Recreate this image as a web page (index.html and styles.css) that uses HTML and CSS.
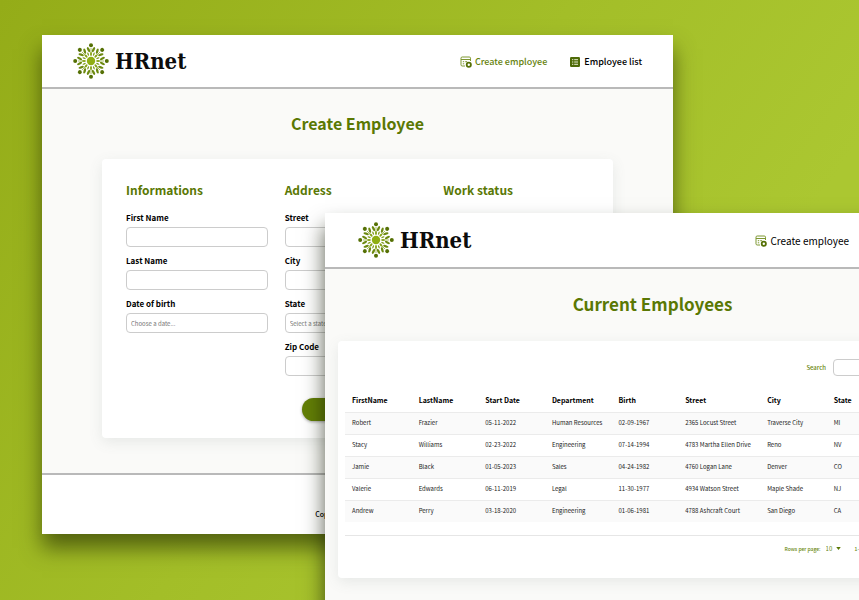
FILE: index.html
```html
<!DOCTYPE html>
<html lang="en">
<head>
<meta charset="utf-8">
<title>HRnet</title>
<link rel="stylesheet" href="styles.css">
</head>
<body>
<svg class="sprite" aria-hidden="true">
  <symbol id="logo" viewBox="0 0 36 36">
    <g id="ray">
      <circle cx="18" cy="2.200" r="2" fill="#557005"/>
      <path d="M18 5v5" stroke="#8aa32c" stroke-width=".7"/>
      <ellipse cx="18" cy="11" rx="1" ry="1.900" fill="#86a316"/>
      <ellipse cx="15.500" cy="6.600" rx="1.200" ry="2.800" transform="rotate(-28 15.500 6.600)" fill="#6d8a10"/>
      <ellipse cx="20.500" cy="6.600" rx="1.200" ry="2.800" transform="rotate(28 20.500 6.600)" fill="#6d8a10"/>
      <ellipse cx="18" cy="10.600" rx=".7" ry="1.700" transform="rotate(22.500 18 18)" fill="#7f9b1c"/>
    </g>
    <use href="#ray" transform="rotate(45 18 18)"/>
    <use href="#ray" transform="rotate(90 18 18)"/>
    <use href="#ray" transform="rotate(135 18 18)"/>
    <use href="#ray" transform="rotate(180 18 18)"/>
    <use href="#ray" transform="rotate(225 18 18)"/>
    <use href="#ray" transform="rotate(270 18 18)"/>
    <use href="#ray" transform="rotate(315 18 18)"/>
    <circle cx="18" cy="18" r="4.200" fill="#8fae12"/>
  </symbol>
  <symbol id="icon-create" viewBox="0 0 12 12">
    <path d="M5 10H2.200Q1 10 1 8.800V2.200Q1 1 2.200 1h7.100q1.200 0 1.200 1.200V5M1 3.500h9.500M2.800 5.700h1.400M5.200 5.700h2M2.800 7.800h1.400" fill="none" stroke="#7d9730" stroke-width="1"/>
    <circle cx="8.800" cy="8.800" r="2.100" fill="#fff" stroke="#557005" stroke-width="1.800"/>
  </symbol>
  <symbol id="icon-list" viewBox="0 0 12 12">
    <rect x="1" y="1" width="10" height="10" rx="1.200" fill="#4f6b08"/>
    <path d="M3 3.700h1.300M5.200 3.700H9M3 6h1.300M5.200 6H9M3 8.300h1.300M5.200 8.300H9" stroke="#e9efd6" stroke-width="1"/>
  </symbol>
</svg>

<div class="stage">
  <section class="window window-create">
    <header class="topbar">
      <a class="brand" href="#"><svg class="logo"><use href="#logo"/></svg>HRnet</a>
      <nav class="nav">
        <a class="nav-link active" href="#"><svg class="icon"><use href="#icon-create"/></svg>Create employee</a>
        <a class="nav-link" href="#"><svg class="icon"><use href="#icon-list"/></svg>Employee list</a>
      </nav>
    </header>
    <main class="content">
      <h1>Create Employee</h1>
      <form class="card form-card">
        <div class="columns">
          <div class="column">
            <h2>Informations</h2>
            <label for="first">First Name</label><input id="first" type="text">
            <label for="last">Last Name</label><input id="last" type="text">
            <label for="dob">Date of birth</label><input id="dob" type="text" placeholder="Choose a date...">
          </div>
          <div class="column">
            <h2>Address</h2>
            <label for="street">Street</label><input id="street" type="text">
            <label for="city">City</label><input id="city" type="text">
            <label for="state">State</label><select id="state"><option>Select a state...</option></select>
            <label for="zip">Zip Code</label><input id="zip" type="text">
          </div>
          <div class="column">
            <h2>Work status</h2>
          </div>
        </div>
        <button class="submit" type="button" aria-label="Save"></button>
      </form>
    </main>
    <footer class="footer">Copyright © 2023 - HRnet</footer>
  </section>

  <section class="window window-list">
    <header class="topbar">
      <a class="brand" href="#"><svg class="logo"><use href="#logo"/></svg>HRnet</a>
      <nav class="nav">
        <a class="nav-link" href="#"><svg class="icon"><use href="#icon-create"/></svg>Create employee</a>
      </nav>
    </header>
    <main class="content">
      <h1>Current Employees</h1>
      <div class="card table-card">
        <div class="search"><label for="search">Search</label><input id="search" type="text"></div>
        <table>
          <colgroup><col><col><col><col><col><col class="wide"><col><col><col></colgroup>
          <thead>
            <tr><th>FirstName</th><th>LastName</th><th>Start Date</th><th>Department</th><th>Birth</th><th>Street</th><th>City</th><th>State</th><th></th></tr>
          </thead>
          <tbody>
            <tr><td>Robert</td><td>Frazier</td><td>05-11-2022</td><td>Human Resources</td><td>02-09-1967</td><td>2365 Locust Street</td><td>Traverse City</td><td>MI</td><td></td></tr>
            <tr><td>Stacy</td><td>Williams</td><td>02-23-2022</td><td>Engineering</td><td>07-14-1994</td><td>4783 Martha Ellen Drive</td><td>Reno</td><td>NV</td><td></td></tr>
            <tr><td>Jamie</td><td>Black</td><td>01-05-2023</td><td>Sales</td><td>04-24-1982</td><td>4760 Logan Lane</td><td>Denver</td><td>CO</td><td></td></tr>
            <tr><td>Valerie</td><td>Edwards</td><td>06-11-2019</td><td>Legal</td><td>11-30-1977</td><td>4934 Watson Street</td><td>Maple Shade</td><td>NJ</td><td></td></tr>
            <tr><td>Andrew</td><td>Perry</td><td>03-18-2020</td><td>Engineering</td><td>01-06-1981</td><td>4788 Ashcraft Court</td><td>San Diego</td><td>CA</td><td></td></tr>
          </tbody>
        </table>
        <div class="pager">
          <label for="rows">Rows per page:</label>
          <span class="rows"><select id="rows"><option>10</option></select><svg class="caret" viewBox="0 0 6 4"><path d="M0 0h6L3 4z"/></svg></span>
          <span>1-5 of 5</span>
        </div>
      </div>
    </main>
  </section>
</div>
</body>
</html>
```

FILE: styles.css
```css
* { box-sizing: border-box; }

body {
  margin: 0;
  font-family: "Noto Sans CJK JP", "Noto Sans", sans-serif;
  color: #000;
}

.sprite { position: absolute; width: 0; height: 0; }

.stage {
  position: relative;
  height: 100vh;
  min-height: 600px;
  overflow: hidden;
  background: linear-gradient(125deg, #94ac18 0%, #a3be28 45%, #abc731 75%, #abc731 100%);
}

.window {
  position: absolute;
  display: flex;
  flex-direction: column;
  background: #fafaf8;
}

.window-create {
  left: 42px;
  right: 186px;
  top: 35px;
  box-shadow: 0 14px 20px rgba(50, 60, 5, .7);
}

.window-list {
  left: 325px;
  right: -121px;
  top: 213px;
  min-height: 420px;
  box-shadow: 0 14px 20px rgba(20, 25, 5, .7);
}

.topbar {
  display: flex;
  align-items: center;
  justify-content: space-between;
  height: 54px;
  padding: 0 31px;
  background: #fff;
  border-bottom: 2px solid #b9b9b9;
}

.brand {
  display: flex;
  align-items: center;
  gap: 6px;
  font-family: "DejaVu Serif Condensed", "DejaVu Serif", serif;
  font-weight: 700;
  font-size: 22px;
  color: #0c0c0c;
  text-decoration: none;
}

.logo { width: 36px; height: 36px; }
.nav { display: flex; gap: 22px; }

.nav-link {
  display: flex;
  align-items: center;
  gap: 3px;
  padding-top: 1px;
  font-size: 9px;
  font-weight: 500;
  line-height: 16px;
  color: #000;
  text-decoration: none;
}

.nav-link.active { color: #66820c; }
.icon { width: 12px; height: 12px; }

h1, h2 { margin: 0; font-weight: 700; color: #5a7804; }
h1 { font-size: 16px; line-height: 24px; text-align: center; }
h2 { font-size: 12px; line-height: 18px; }

.card {
  background: #fff;
  border-radius: 4px;
  box-shadow: 0 4px 14px rgba(90, 110, 110, .12);
}

.window-create .content { padding: 22px 60px 35px; }

.form-card {
  margin-top: 24px;
  padding: 22px 28px 17px 24px;
}

.columns {
  display: grid;
  grid-template-columns: repeat(3, 1fr);
  gap: 17px;
}

.column { display: flex; flex-direction: column; }
.column h2 { margin-bottom: 12px; }

.column label {
  margin-bottom: 2px;
  font-size: 8px;
  font-weight: 700;
  line-height: 14px;
}

input, select {
  width: 100%;
  height: 20px;
  padding: 0 4px;
  border: 1px solid #ccc;
  border-radius: 4px;
  background: #fff;
  color: #777;
  font-family: inherit;
  font-size: 6px;
  appearance: none;
}

input::placeholder { color: #777; }
.column input, .column select { margin-bottom: 7px; }

.submit {
  display: block;
  width: 108px;
  height: 23px;
  margin: 15px auto 0;
  border: 0;
  border-radius: 12px;
  background: #637f06;
  box-shadow: 0 1px 3px rgba(0, 0, 0, .35);
}

.footer {
  height: 61px;
  padding-top: 33px;
  border-top: 2px solid #b9b9b9;
  background: #fff;
  font-size: 7px;
  font-weight: 500;
  line-height: 12px;
  text-align: center;
}

.window-list .topbar { height: 56px; padding: 0 131px 0 33px; }
.window-list .nav-link { font-size: 10px; font-weight: 400; }
.window-list .content { padding: 23px 13px; }
.window-list h1 { font-size: 17px; }
.table-card { margin-top: 25px; padding: 18px 7px 24px; }

.search {
  display: flex;
  align-items: center;
  justify-content: flex-end;
  gap: 7px;
  margin-bottom: 12px;
  font-size: 6px;
  font-weight: 500;
  line-height: 17px;
  color: #6b870f;
}

.search input { width: 127px; height: 17px; }

table {
  width: 100%;
  table-layout: fixed;
  border-collapse: collapse;
  font-size: 6px;
  line-height: 10px;
  color: #222;
}

.wide { width: 82px; }
th, td { height: 22px; padding: 0 7px; text-align: left; white-space: nowrap; }
th { height: 24px; font-size: 7px; font-weight: 700; color: #000; }
tbody tr { border-top: 1px solid #ebebeb; }
tbody tr:nth-child(odd) { background: #fafafa; }

.pager {
  display: flex;
  align-items: center;
  gap: 5px;
  margin-top: 13px;
  padding: 7px 88px 0 0;
  justify-content: flex-end;
  border-top: 1px solid #e6e6e6;
  font-size: 5px;
  font-weight: 500;
  line-height: 11px;
  color: #6b870f;
}

.rows { display: flex; align-items: center; margin-right: 9px; }
.rows select { width: 10px; height: 11px; padding: 0; border: 0; color: inherit; font-size: 6px; }
.caret { width: 5px; height: 3px; fill: #5a7804; }
```
